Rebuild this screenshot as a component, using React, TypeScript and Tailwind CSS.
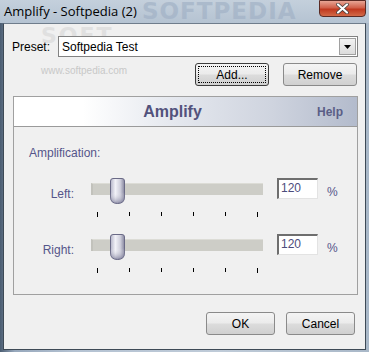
import React from "react";

const font = { fontFamily: '"Liberation Sans", Arial, sans-serif' };

function Thumb() {
  return (
    <svg width="15" height="26" viewBox="0 0 15 26" className="block">
      <defs>
        <linearGradient id="tg" x1="0" x2="1" y1="0" y2="0">
          <stop offset="0" stopColor="#b4b4c8" />
          <stop offset="0.35" stopColor="#f2f2f8" />
          <stop offset="0.7" stopColor="#cfcfdc" />
          <stop offset="1" stopColor="#86869e" />
        </linearGradient>
        <linearGradient id="tb" x1="0" x2="0" y1="0" y2="1">
          <stop offset="0" stopColor="#ffffff" stopOpacity="0" />
          <stop offset="0.55" stopColor="#ffffff" stopOpacity="0" />
          <stop offset="1" stopColor="#55557a" stopOpacity="0.6" />
        </linearGradient>
      </defs>
      <path
        d="M3 0.5 H12 Q14.5 0.5 14.5 3 V19 Q14.5 25.5 7.5 25.5 Q0.5 25.5 0.5 19 V3 Q0.5 0.5 3 0.5 Z"
        fill="url(#tg)"
        stroke="#6a6a86"
      />
      <path
        d="M3 0.5 H12 Q14.5 0.5 14.5 3 V19 Q14.5 25.5 7.5 25.5 Q0.5 25.5 0.5 19 V3 Q0.5 0.5 3 0.5 Z"
        fill="url(#tb)"
      />
    </svg>
  );
}

function SliderRow({ label }: { label: string }) {
  const ticks = [6, 38, 70, 102, 134, 166];
  return (
    <div className="flex h-[40px]">
      <div className="w-[60px] text-right text-[12px] text-[#55558a] pt-[7px]">{label}</div>
      <div className="ml-[17px] w-[172px] flex flex-col">
        <div className="relative h-[25px]">
          <div className="absolute left-0 right-0 top-[5px] h-[12px] bg-[#cdcdc7] border-t border-[#dcdcd6] border-l-2 border-l-[#c2c2bc]" />
          <div className="absolute left-[19px] top-0">
            <Thumb />
          </div>
        </div>
        <div className="relative h-[15px]">
          {ticks.map((t, i) => (
            <div
              key={i}
              className={`absolute w-px bg-black ${i === 0 || i === ticks.length - 1 ? "top-[9px] h-[5px]" : "top-[9px] h-[4px]"}`}
              style={{ left: t }}
            />
          ))}
        </div>
      </div>
      <div className="ml-[14px] mt-0 w-[41px] h-[21px] bg-white border-t-2 border-l-2 border-t-[#6e6e6e] border-l-[#6e6e6e] border-r border-b border-r-[#e3e3e3] border-b-[#e3e3e3] text-[12px] text-[#4c4c7c] pl-[2px] leading-[16px]">
        120
      </div>
      <div className="ml-[9px] text-[12px] text-[#55558a] pt-[5px]">%</div>
    </div>
  );
}

function Btn({ children, def, w }: { children: React.ReactNode; def?: boolean; w: number }) {
  return (
    <div
      className={`h-[23px] rounded-[3px] border ${def ? "border-[#3c3c3c]" : "border-[#8a8a8a]"} bg-[linear-gradient(#f4f4f4_0%,#ebebeb_48%,#dcdcdc_52%,#d0d0d0_100%)] flex items-center justify-center text-[12px] text-black p-[2px]`}
      style={{ width: w }}
    >
      <div
        className={`w-full h-full flex items-center justify-center ${def ? "border border-dotted border-black" : ""}`}
      >
        {children}
      </div>
    </div>
  );
}

export default function App() {
  return (
    <div
      className="w-[369px] h-[352px] relative overflow-hidden bg-[linear-gradient(90deg,#4b5d72_0%,#97a8bc_4%,#b4c2d2_20%,#bfcbd8_60%,#a9b8c8_100%)]"
      style={font}
    >
      {/* title bar */}
      <div className="relative h-[23px] flex items-center pl-[4px] bg-[linear-gradient(180deg,#c4d0dc_0%,#b5c3d2_100%)]">
        <span
          className="absolute left-[142px] top-0 text-[23px] leading-[23px] font-bold tracking-[1px] text-[#a2b2c6] opacity-70"
          style={{ fontFamily: '"DejaVu Sans", sans-serif' }}
        >
          SOFTPEDIA
        </span>
        <span className="relative text-[13px] text-black" style={{ fontFamily: '"Open Sans", "Noto Sans", sans-serif' }}>
          Amplify - Softpedia (2)
        </span>
        <div className="absolute right-[3px] top-0 w-[47px] h-[17px] rounded-b-[4px] border border-[#5a2a24] bg-[linear-gradient(180deg,#e8a595_0%,#d0604a_45%,#c0381f_55%,#d26a48_100%)] flex items-center justify-center">
          <svg width="13" height="11" viewBox="0 0 13 11">
            <path d="M2 1.5 L11 9.5 M11 1.5 L2 9.5" stroke="#3a3a3a" strokeWidth="3.6" strokeLinecap="round" />
            <path d="M2 1.5 L11 9.5 M11 1.5 L2 9.5" stroke="#ffffff" strokeWidth="2.2" strokeLinecap="round" />
          </svg>
        </div>
      </div>

      {/* client area */}
      <div className="relative ml-[3px] w-[363px] h-[327px] bg-[#f0f0f0] border border-[#3e4a56] border-t-[#6f7d8c]">
        <span className="absolute left-[37px] top-0 text-[22px] leading-[24px] font-bold text-[#dadada] tracking-[2px] opacity-70" style={{ fontFamily: '"DejaVu Sans", sans-serif' }}>
          SOFT
        </span>
        <span className="absolute left-[37px] top-[39px] text-[10px] text-[#c8c8c8]">www.softpedia.com</span>

        {/* preset row */}
        <div className="relative flex items-center mt-[12px] ml-[8px]">
          <span className="text-[12px] text-black w-[46px]">Preset:</span>
          <div className="w-[300px] h-[21px] bg-white border border-[#828282] flex items-center">
            <span className="flex-1 pl-[3px] text-[12px] text-black">Softpedia Test</span>
            <div className="w-[17px] h-[17px] mr-[1px] bg-[linear-gradient(#f2f2f2,#dcdcdc)] border border-[#a0a0a0] flex items-center justify-center">
              <svg width="7" height="4" viewBox="0 0 7 4">
                <path d="M0 0 H7 L3.5 4 Z" fill="#000" />
              </svg>
            </div>
          </div>
        </div>

        {/* add/remove */}
        <div className="relative flex mt-[6px] ml-[191px] gap-[14px]">
          <Btn def w={74}>Add...</Btn>
          <Btn w={74}>Remove</Btn>
        </div>

        {/* panel */}
        <div className="ml-[9px] mt-[10px] w-[345px] h-[199px] border border-[#a0a0a0] flex flex-col">
          <div className="h-[30px] border-b border-[#9a9a9a] bg-[linear-gradient(90deg,#ffffff_0%,#ffffff_20%,#e6e9ef_45%,#cfd4df_75%,#b3bbcc_100%)] relative flex items-center justify-center">
            <span className="text-[16px] font-bold text-[#52527c] mr-[26px]">Amplify</span>
            <span className="absolute right-[14px] text-[12px] font-bold text-[#5a5e86]">Help</span>
          </div>
          <div className="pl-[15px] pt-[17px] text-[12px] text-[#55558a]">Amplification:</div>
          <div className="mt-[16px]">
            <SliderRow label="Left:" />
            <div className="h-[16px]" />
            <SliderRow label="Right:" />
          </div>
        </div>

        {/* ok / cancel */}
        <div className="flex mt-[17px] ml-[202px] gap-[11px]">
          <Btn w={69}>OK</Btn>
          <Btn w={69}>Cancel</Btn>
        </div>
      </div>
    </div>
  );
}
